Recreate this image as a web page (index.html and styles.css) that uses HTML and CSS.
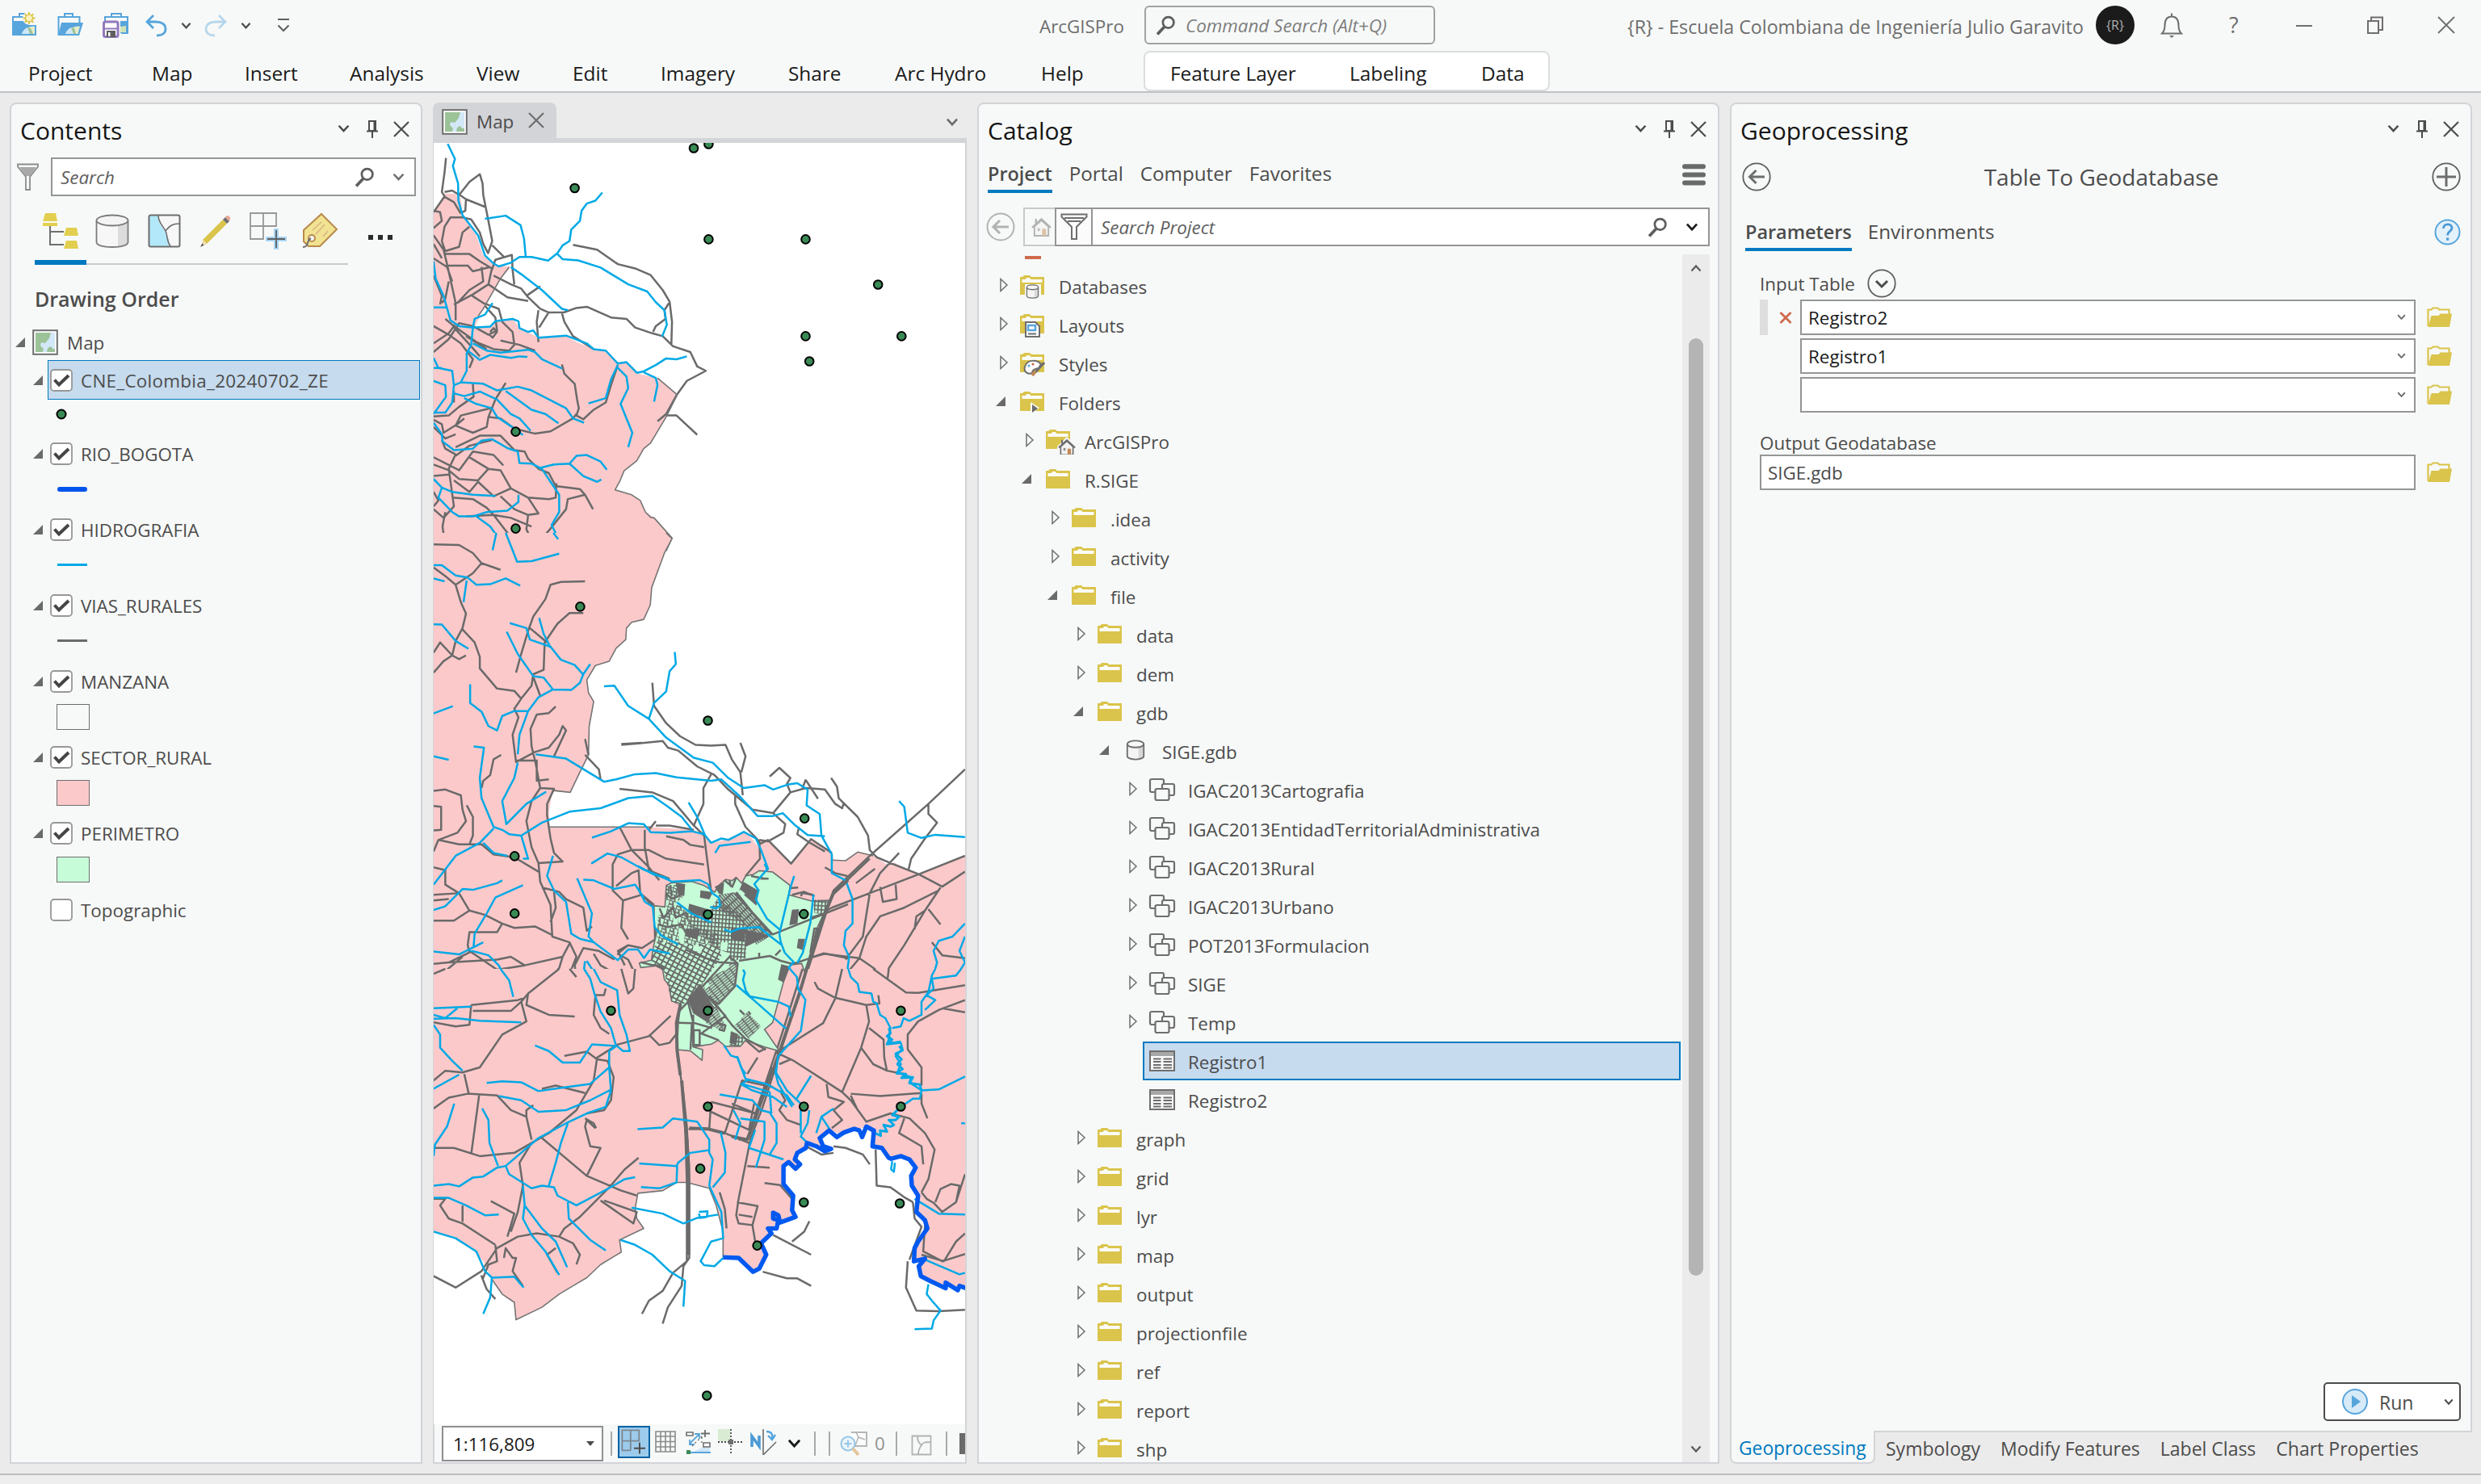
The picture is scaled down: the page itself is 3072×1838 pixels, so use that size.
FILE: index.html
```html
<!DOCTYPE html>
<html lang="en">
<head>
<meta charset="utf-8">
<title>ArcGISPro</title>
<link rel="stylesheet" href="styles.css">
</head>
<body>
<svg class="defs" width="0" height="0" aria-hidden="true">
  <defs>
    <symbol id="chev" viewBox="0 0 14 10"><path d="M1.500 1.500 7 7.500 12.500 1.500" fill="none" stroke="currentColor" stroke-width="2.400"/></symbol>
    <symbol id="pin" viewBox="0 0 16 22"><path d="M4 1h8v12H4zM1 13.500h14M8 14v8M10.500 1v12" fill="none" stroke="currentColor" stroke-width="2"/></symbol>
    <symbol id="close" viewBox="0 0 22 22"><path d="M2 2 20 20M20 2 2 20" fill="none" stroke="currentColor" stroke-width="2.200"/></symbol>
    <symbol id="mag" viewBox="0 0 24 24"><circle cx="15" cy="8.500" r="6.500" fill="none" stroke="currentColor" stroke-width="2.600"/><path d="M10.500 13.500 2 22.500" stroke="currentColor" stroke-width="3.600"/></symbol>
    <symbol id="open" viewBox="0 0 14 14"><path d="M13 1v12H1z" fill="#6a6a6a"/></symbol>
    <symbol id="shut" viewBox="0 0 12 18"><path d="M2 1.500 10 9 2 16.500z" fill="none" stroke="#6e6e6e" stroke-width="1.500"/></symbol>
    <symbol id="folder" viewBox="0 0 32 26"><path d="M1 3h3l2-2h7l2 2h16v22H1z" fill="#dac44b"/><path d="M3.500 6h4l2-2h3l2 2h14v4H3.500z" fill="#fbfbf7"/></symbol>
    <symbol id="folderopen" viewBox="0 0 32 26"><path d="M2 24V3.500h4l2-2h6l2 2h12V10" fill="none" stroke="#dac44b" stroke-width="2.200"/><path d="M6 11h9l2-2.500h14.500L28.500 25H2z" fill="#dac44b"/></symbol>
    <symbol id="cyl" viewBox="0 0 42 42"><path d="M1.500 8v27c0 3.500 8 6 19.500 6s19.500-2.500 19.500-6V8" fill="#f7f7f7"/><path d="M28 14v26.500c7-.5 12-3 12-5.500V9c-1 3-5 4.500-12 5z" fill="#dcdcdc"/><path d="M1.500 8v27c0 3.500 8 6 19.500 6s19.500-2.500 19.500-6V8" fill="none" stroke="#7b7b7b" stroke-width="1.800"/><ellipse cx="21" cy="8" rx="19.500" ry="6.500" fill="#f4f4f4" stroke="#7b7b7b" stroke-width="1.800"/></symbol>
    <symbol id="cyls" viewBox="0 0 26 28"><path d="M2 6v16c0 2.500 5 4.500 11 4.500s11-2 11-4.500V6" fill="#f4f4f4"/><path d="M17 10v16c4-1 7-2 7-4V6z" fill="#d8d8d8"/><path d="M2 6v16c0 2.500 5 4.500 11 4.500s11-2 11-4.500V6" fill="none" stroke="#6e6e6e" stroke-width="2"/><ellipse cx="13" cy="6" rx="11" ry="4.500" fill="#f7f7f7" stroke="#6e6e6e" stroke-width="2"/></symbol>
    <symbol id="dataset" viewBox="0 0 34 30"><g fill="#f7f9f8" stroke="#6e6e6e" stroke-width="2.200"><rect x="2" y="2" width="17" height="16" rx="2"/><rect x="17" y="8" width="15" height="14" rx="2"/><rect x="8.500" y="14" width="17" height="14" rx="2"/></g></symbol>
    <symbol id="table" viewBox="0 0 34 28"><rect x="2" y="2" width="30" height="24" fill="#f9f9f9" stroke="#6e6e6e" stroke-width="2"/><path d="M3 5.500h28" stroke="#a8a8a8" stroke-width="5"/><path d="M6 11.500h9.500M18.500 11.500H29M6 15h9.500M18.500 15H29M6 19h9.500M18.500 19H29M6 22.500h9.500M18.500 22.500H29" stroke="#6e6e6e" stroke-width="1.800"/></symbol>
    <symbol id="mapicon" viewBox="0 0 32 32"><rect x="1.200" y="1.200" width="29.600" height="29.600" fill="#fff" stroke="#6e6e6e" stroke-width="2"/><rect x="4" y="4" width="24" height="24" fill="#9cc298"/><path d="M23 4h5v20h-3l-2-3-4 2-1 5h-5l1-4-4-4 1-4 5 1 5-6z" fill="#d3e8f7"/></symbol>
    <symbol id="house" viewBox="0 0 26 26"><path d="M4 12v12h18V12L13 4z" fill="#f4f4f4" stroke="currentColor" stroke-width="2"/><path d="M1 13.500 13 2.500 25 13.500M6 8V2" fill="none" stroke="currentColor" stroke-width="2.400"/><path d="M14 24v-9h5v9z" fill="#c08a55"/><path d="M8 14h3v4H8z" fill="#8b8b8b"/></symbol>
    <symbol id="sel" viewBox="0 0 46 46"><path d="M1 1h32v16H1zM17 1v32H1V17" fill="none" stroke="#979797" stroke-width="1.800"/><path d="M33 20v26M20 33h26" stroke="#a9d6f5" stroke-width="6"/><path d="M33 22v22M22 33h22" stroke="#5e5e5e" stroke-width="1.800"/></symbol>
    <symbol id="check" viewBox="0 0 28 28"><rect x="1" y="1" width="26" height="26" rx="4" fill="#fff" stroke="#979797" stroke-width="1.800"/><path d="M5.500 13.500 11 19.500 23 8" fill="none" stroke="#454545" stroke-width="4"/></symbol>
    <symbol id="uncheck" viewBox="0 0 28 28"><rect x="1" y="1" width="26" height="26" rx="4" fill="#fff" stroke="#979797" stroke-width="1.800"/></symbol>
  </defs>
</svg>

<header class="titlebar">
  <div class="qat">
    <svg width="32" height="32" viewBox="0 0 32 32"><path d="M1 11h15l6 5h9v13H1z" fill="#57a5dc"/><path d="M2 11V6h14M10 6V2h7" fill="none" stroke="#57a5dc" stroke-width="2"/><path d="M13 27c2-6 7-9 16-9.500V27z" fill="#e4eccb"/><path d="M13 27c1.500-4 4-6.500 7-8l6 8z" fill="#cfe6f7"/><path d="M20 19l4 1 3 7h-4z" fill="#9cc298"/><circle cx="22" cy="7.500" r="8" fill="#f7f9f8"/><path d="M22 0v15M14.500 7.500h15M16.700 2.200l10.600 10.600M27.300 2.200 16.700 12.800" stroke="#dac44b" stroke-width="2"/><circle cx="22" cy="7.500" r="4.500" fill="#fbf0c0" stroke="#dac44b" stroke-width="1.600"/></svg>
    <svg width="34" height="32" viewBox="0 0 34 32"><path d="M1.500 29V6h26v7M9 6V2h10v4" fill="none" stroke="#57a5dc" stroke-width="2"/><path d="M5 13h27l-5 16H1z" fill="#57a5dc"/><path d="M10 27c2-6 8-9 18-9.500L25.500 27z" fill="#e4eccb"/><path d="M10 27c1.500-4 4-6.500 7-8l4 8z" fill="#cfe6f7"/><path d="M17 19l4 1 2 7h-3z" fill="#9cc298"/></svg>
    <svg width="34" height="36" viewBox="0 0 34 36"><path d="M3 13V8h28v20h-8M11 8V4h12v4" fill="none" stroke="#57a5dc" stroke-width="2"/><path d="M22 13h9v15h-9z" fill="#57a5dc"/><path d="M22 20l7-1v8h-7z" fill="#cfe3b8"/><rect x="1.500" y="14" width="17.500" height="18.500" rx="2" fill="#fff" stroke="#9279bd" stroke-width="3"/><path d="M3 22.500h15" stroke="#9279bd" stroke-width="2"/><path d="M5 33v-8h11v8z" fill="#5e5e5e"/><path d="M7 32v-5h2.500v5z" fill="#fff"/></svg>
    <svg width="30" height="32" viewBox="0 0 30 32"><path d="M11 4 3 12l8 8M4 12h10c7 0 12 3 12 9 0 5-4 8-11 8" fill="none" stroke="#57a5dc" stroke-width="2.800"/></svg>
    <svg class="mini g1" width="13" height="10"><use href="#chev"/></svg>
    <svg class="faded g2" width="30" height="32" viewBox="0 0 30 32"><path d="M19 4l8 8-8 8M26 12H15C8 12 3 15 3 21c0 5 4 8 11 8" fill="none" stroke="#57a5dc" stroke-width="2.800"/></svg>
    <svg class="mini g3" width="13" height="10"><use href="#chev"/></svg>
    <svg class="g4" width="16" height="20" viewBox="0 0 16 20"><path d="M1 3h14M1.500 10.500 8 17l6.500-6.500" fill="none" stroke="#5e5e5e" stroke-width="2"/></svg>
  </div>
  <span class="appname">ArcGISPro</span>
  <div class="cmdsearch"><svg width="25" height="25"><use href="#mag"/></svg><i>Command Search (Alt+Q)</i></div>
  <span class="org">{R} - Escuela Colombiana de Ingeniería Julio Garavito</span>
  <span class="avatar">{R}</span>
  <div class="winbtns">
    <svg width="28" height="32" viewBox="0 0 28 32"><path d="M2 26.500h24c-3-3-3.500-5-3.500-10C22.500 9 19 5.500 14 5.500S5.500 9 5.500 16.500c0 5-.5 7-3.500 10zM14 5V1.500" fill="none" stroke="#6e6e6e" stroke-width="2"/><path d="M11 29h6l-3 3z" fill="#6e6e6e"/></svg>
    <span class="qm">?</span>
    <svg width="20" height="22" viewBox="0 0 20 22"><path d="M0 12h20" stroke="#6e6e6e" stroke-width="2"/></svg>
    <svg width="22" height="22" viewBox="0 0 22 22"><path d="M2 6h13v15H2zM6 6V1.500h14V17h-5" fill="none" stroke="#6e6e6e" stroke-width="2"/></svg>
    <svg width="24" height="24" viewBox="0 0 24 24"><path d="M2 2 22 22M22 2 2 22" stroke="#6e6e6e" stroke-width="1.800"/></svg>
  </div>
</header>
<nav class="ribbon">
  <div class="maintabs"><span>Project</span><span>Map</span><span>Insert</span><span>Analysis</span><span>View</span><span>Edit</span><span>Imagery</span><span>Share</span><span>Arc Hydro</span><span>Help</span></div>
  <div class="ctxtabs"><span>Feature Layer</span><span>Labeling</span><span>Data</span></div>
</nav>

<main class="work">
  <section class="panel contents">
    <div class="phead"><h2>Contents</h2><div class="pbtns"><svg width="15" height="11"><use href="#chev"/></svg><svg width="16" height="22"><use href="#pin"/></svg><svg width="22" height="22"><use href="#close"/></svg></div></div>
    <div class="csearch">
      <svg width="27" height="34" viewBox="0 0 27 34"><path d="M1 1.500h25v3L16 17v16h-5V17L1 4.500z" fill="#f7f9f8" stroke="#8b8b8b" stroke-width="1.800"/><path d="M3 5h21l-8 11h-5z" fill="#a8a8a8"/></svg>
      <div class="box"><i>Search</i><svg width="25" height="25"><use href="#mag"/></svg><svg class="c" width="15" height="11"><use href="#chev"/></svg></div>
    </div>
    <div class="ctools">
      <svg width="44" height="46" viewBox="0 0 44 46"><path d="M3 1h13l2 10H0zM0 13h18v4H0z" fill="#e3cf4f"/><path d="M29 19h13l2 10H26zM29 35h13l2 10H26z" fill="#e3cf4f"/><path d="M9 17v23h17M9 24h17" fill="none" stroke="#6e6e6e" stroke-width="2"/></svg>
      <svg width="42" height="42"><use href="#cyl"/></svg>
      <svg width="42" height="42" viewBox="0 0 42 42"><rect x="1.500" y="1.500" width="39" height="39" rx="2" fill="#f7f7f7"/><path d="M2 2h11c0 8 2 11 7 18 5 7 6 12 7 20H2z" fill="#b3e8fa"/><path d="M13 2c0 8 5 12 9 19 3 7 1 12 6 19M22 21c5-6 8-9 18-9" fill="none" stroke="#6e6e6e" stroke-width="1.600"/><rect x="1.500" y="1.500" width="38" height="39" rx="2" fill="none" stroke="#6e6e6e" stroke-width="2"/></svg>
      <svg width="40" height="42" viewBox="0 0 40 42"><path d="M4 32 29 7l5 5L9 37z" fill="#dac44b"/><path d="M29 7l3-3 5 5-3 3z" fill="#6e6e6e"/><path d="M32 4c1-2 3-3 5-1s1 4 0 6z" fill="#e9a795"/><path d="M4 32l5 5-7 4z" fill="#f0dcb0"/><path d="M1 41l2.500-4.500 2 2z" fill="#4c4c4c"/></svg>
      <svg width="46" height="46"><use href="#sel"/></svg>
      <svg width="46" height="46" viewBox="0 0 46 46"><path d="M24 2 43 21 22 42H8l-6-6V22z" fill="#f1e392" stroke="#b98b4c" stroke-width="2"/><circle cx="12" cy="32" r="4" fill="#f7f9f8" stroke="#b98b4c" stroke-width="2"/><path d="M13 22l11-10M17 27l11-12M26 30l6-7" stroke="#dbb389" stroke-width="1.500"/><path d="M11 32c-6 3-2 11-10 11" fill="none" stroke="#6e6e6e" stroke-width="2"/></svg>
      <svg class="dots" width="31" height="6" viewBox="0 0 31 6"><path d="M0 0h6v6H0zM12 0h6v6h-6zM24 0h6v6h-6z" fill="#2b2b2b"/></svg>
    </div>
    <div class="cline"></div>
    <h3>Drawing Order</h3>
    <ul class="toc">
      <li class="row root"><svg class="tri" width="14" height="14"><use href="#open"/></svg><svg class="mi" width="32" height="32"><use href="#mapicon"/></svg><span class="tx">Map</span></li>
      <li class="row"><svg class="tri" width="14" height="14"><use href="#open"/></svg><div class="lab selected"><svg width="28" height="28"><use href="#check"/></svg><span class="tx">CNE_Colombia_20240702_ZE</span></div></li>
      <li class="sym first"><svg width="14" height="14"><circle cx="7" cy="7" r="5.500" fill="#3a8a56" stroke="#000" stroke-width="2"/></svg></li>
      <li class="row"><svg class="tri" width="14" height="14"><use href="#open"/></svg><div class="lab"><svg width="28" height="28"><use href="#check"/></svg><span class="tx">RIO_BOGOTA</span></div></li>
      <li class="sym"><b class="ln river"></b></li>
      <li class="row"><svg class="tri" width="14" height="14"><use href="#open"/></svg><div class="lab"><svg width="28" height="28"><use href="#check"/></svg><span class="tx">HIDROGRAFIA</span></div></li>
      <li class="sym"><b class="ln hydro"></b></li>
      <li class="row"><svg class="tri" width="14" height="14"><use href="#open"/></svg><div class="lab"><svg width="28" height="28"><use href="#check"/></svg><span class="tx">VIAS_RURALES</span></div></li>
      <li class="sym"><b class="ln road"></b></li>
      <li class="row"><svg class="tri" width="14" height="14"><use href="#open"/></svg><div class="lab"><svg width="28" height="28"><use href="#check"/></svg><span class="tx">MANZANA</span></div></li>
      <li class="sym"><b class="sw"></b></li>
      <li class="row"><svg class="tri" width="14" height="14"><use href="#open"/></svg><div class="lab"><svg width="28" height="28"><use href="#check"/></svg><span class="tx">SECTOR_RURAL</span></div></li>
      <li class="sym"><b class="sw pink"></b></li>
      <li class="row"><svg class="tri" width="14" height="14"><use href="#open"/></svg><div class="lab"><svg width="28" height="28"><use href="#check"/></svg><span class="tx">PERIMETRO</span></div></li>
      <li class="sym"><b class="sw green"></b></li>
      <li class="row"><span class="tri"></span><div class="lab"><svg width="28" height="28"><use href="#uncheck"/></svg><span class="tx">Topographic</span></div></li>
    </ul>
  </section>

  <section class="mapview">
    <div class="mtabs"><div class="mtab"><svg width="32" height="32"><use href="#mapicon"/></svg><span>Map</span><svg class="x" width="22" height="22"><use href="#close"/></svg></div><svg class="more" width="16" height="11"><use href="#chev"/></svg></div>
    <svg class="map" width="658" height="1587" viewBox="537 177 658 1587" preserveAspectRatio="none">
      <defs>
        <pattern id="gridA" width="13" height="15" patternUnits="userSpaceOnUse" patternTransform="rotate(4)"><path d="M0 0H13M0 0V15" fill="none" stroke="#6a6a6a" stroke-width="10"/></pattern>
        <pattern id="gridB" width="19" height="17" patternUnits="userSpaceOnUse" patternTransform="rotate(28)"><path d="M0 0H19M0 0V17" fill="none" stroke="#6a6a6a" stroke-width="12"/></pattern>
        <pattern id="gridC" width="9" height="26" patternUnits="userSpaceOnUse" patternTransform="rotate(-42)"><path d="M0 0H9M0 0V26" fill="none" stroke="#6a6a6a" stroke-width="11"/></pattern>
        <pattern id="gridD" width="30" height="24" patternUnits="userSpaceOnUse" patternTransform="rotate(16)"><path d="M0 0H30M0 0V24M12 0l8 24M0 14h14" fill="none" stroke="#6a6a6a" stroke-width="6"/></pattern>
        <pattern id="gridE" width="26" height="9" patternUnits="userSpaceOnUse" patternTransform="rotate(-38)"><path d="M0 0H26M0 0V9" fill="none" stroke="#6a6a6a" stroke-width="9"/></pattern>
      </defs>
      <rect x="537" y="177" width="658" height="1587" fill="#fff"/>
      <!-- northern sheet -->
      <g class="sheet" transform="translate(530 120) scale(.4273 .3571)">
        <path class="rural" d="M0 420 16 400 48 335 75 335 95 350 100 410 140 480 160 550 190 580 240 590 210 630 160 735 135 800 185 795 195 775 245 770 265 800 320 835 400 830 430 850 480 875 510 880 550 920 575 920 610 960 665 975 722 1033 690 1110 660 1170 645 1200 625 1220 605 1262 568 1297 555 1335 542 1363 590 1380 615 1400 630 1440 655 1460 707 1530 690 1575 0 1575z"/>
        <path class="via" d="M52 212 48 260 40 330 48 345 16 400M48 330 70 325 90 340 120 295 150 268 158 300 160 340 170 400 186 500 174 542 160 510 150 470 125 425 100 418 65 418 48 450 40 500 50 535 90 520 100 470 120 450M92 340 110 355 168 383M110 355 108 395 98 400M45 345 75 365 95 405M16 395 35 400 40 430 16 455M16 480 45 530 55 580 70 660 80 715 80 775M50 545 120 545 150 570 185 595 175 650 130 685 75 720M16 510 40 560M55 585 115 585 130 605 180 590M186 515 220 555M185 600 195 565 243 548 245 600 250 650M190 620 240 650 270 665 290 695 325 735 350 748 395 747 430 732 460 728 530 765 575 770 600 800 650 820 680 830 710 865 760 885 780 935 805 950 750 985 720 1035 690 1100 665 1125M285 690 325 657M175 650 230 695 290 708M320 740 315 780 320 850M348 750 322 800M388 750 395 780 420 830 480 875M420 513 490 530 550 580 600 595 645 618 680 670 700 710 707 780 705 862M698 715 685 740 688 770 660 795 652 815M128 690 160 715 205 735 215 780 245 815 250 860 235 880 190 875 140 850 75 795 50 770M165 725 195 765 200 810 175 825 130 795 90 785 60 840 16 885M16 795 60 825 95 855 130 910 120 940M16 855 60 820 78 790M180 815 190 802 200 815 187 835 178 825M75 800 125 865 150 900M110 830 170 875M210 845 265 860 310 880M388 928 395 960 425 995 432 1050 437 1080 430 1105 450 1118 480 1085 515 1060 530 1000 550 930M75 1020 75 1060M130 995 132 1040 90 1075 60 1105 16 1108M225 992 195 1050 175 1110 170 1145 130 1165 80 1140 95 1105 180 1080M16 1120 40 1135 45 1165 85 1135 105 1115M175 1110 210 1115 250 1150 310 1168 355 1160 420 1115 430 1100M16 1145 50 1185 80 1170M80 1215 150 1175 210 1175 250 1225 280 1230 290 1255 320 1290 350 1305 370 1350 440 1360 455 1380 478 1430M80 1245 120 1210 185 1190M40 1190 50 1220 80 1240 60 1290 75 1420 45 1460 16 1430M16 1250 90 1295 130 1230 190 1242 218 1278M16 1275 60 1295 90 1325 145 1330 175 1290 120 1250M16 1315 60 1310M75 1330 120 1370 145 1335 190 1385 240 1358 210 1295 175 1290M240 1358 290 1390 350 1395 370 1390 372 1340M16 1370 30 1400 16 1420M70 1390 130 1395 170 1425 190 1450 240 1460 300 1490M210 1385 250 1430 290 1450 320 1445 290 1390M290 1450 285 1500 310 1560 360 1490 400 1430 405 1395 455 1380M110 1455 190 1450 235 1520 262 1575M50 1440 42 1490 50 1560M16 1550 60 1565 105 1575M690 1105 720 1105 780 1172M16 620 40 690 35 720M60 640 50 700 40 715M16 560 55 590 70 640M155 590 160 640 120 670 85 715"/>
        <path class="edge" d="M722 1033 690 1110 660 1170 645 1200 625 1220 605 1262 568 1297 555 1335 542 1363 590 1380 615 1400 630 1440 645 1458 655 1460 707 1530 690 1575M235 590 210 630 160 735 145 760M665 975 722 1033"/>
        <path class="hid" d="M57 163 78 215 72 240 87 300 88 360 100 410 145 480 165 550 190 578 205 588 240 575 265 555 300 555 348 568 375 542 390 515 410 500 415 460 440 430 445 395 460 370 485 360 505 332M165 423 225 412 268 445 278 490 283 553M375 545 390 563 435 567 500 592 580 650 635 675 660 712 685 740 692 790 678 832M240 590 270 615 330 670 388 735 405 740M16 570 22 630 45 690 65 775 90 795 130 800 135 770 165 755 187 715M130 800 180 797 195 778 245 770 262 778 265 802 290 815 305 810 320 835 400 828 460 855 480 875 515 880 550 925 575 920 605 957 625 952 660 930 690 907 720 910 750 900M625 955 660 975 665 1000 655 1057M130 800 125 860 112 890 112 950 95 990 75 1000 70 1060 50 1095 16 1095M16 730 55 730M130 855 170 880 210 887 290 877 310 885 330 910 388 942M115 880 150 912 180 895 240 905 265 900 288 902M550 930 530 980 515 1045 465 1063M550 940 575 970 580 1010 558 1065 575 1115 592 1165 580 1215M95 990 160 995 200 1018 260 1005 300 1018 400 1080 420 1115 452 1130M225 1020 300 1085 340 1100 378 1132M75 1028 105 1038 150 1022 200 1050 240 1100 265 1115 297 1158M105 1045 140 1065 185 1080 200 1110 250 1150 275 1173M16 985 50 1000 52 1040 16 1100M16 905 30 940 70 950 75 1000M16 940 40 940M16 1130 40 1170 42 1195 75 1225 130 1220 155 1192 185 1187 230 1218 260 1230 265 1270 300 1272 330 1290 355 1335 380 1380 380 1440 358 1485 378 1532M320 1288 365 1275 410 1272 430 1245 460 1242 500 1265 518 1293M410 1272 450 1315 490 1335 502 1327M16 1325 40 1355 70 1370 130 1380 195 1384M40 1355 30 1390 70 1440 90 1455 130 1455 170 1440 230 1435 262 1405 262 1380M140 1455 180 1490 198 1520 190 1575M200 1525 225 1522 245 1575"/>
      </g>
      <!-- central sheet -->
      <g class="sheet" transform="translate(530 660) scale(.4273 .3571)">
        <path class="rural" d="M0 0H690L707 20 685 70 672 112 648 190 644 250 625 300 590 310 575 330 573 370 545 400 525 445 485 460 460 510 465 555 480 585 467 670 465 770 440 830 412 900 360 897 350 970 352 1020 645 1020 770 1030 805 1050 825 1075 860 1065 920 1035 955 1085 965 1065 985 1065 1052 1147 1070 1115 1110 1062 1172 1110 1175 1135 1210 1137 1245 1107 1290 1120 1330 1150 1350 1143 1420 1183 1560 1120 1560 1575 0 1575z"/>
        <path class="edge" d="M690 0 707 20 685 70 672 112 648 190 644 250 625 300 590 310 575 330 573 370 545 400 525 445 485 460 460 510 465 555 480 585 467 670 465 770 440 830 412 900 360 893M352 1020H645M1172 1135 1210 1137 1245 1107 1290 1120"/>
        <path class="via" d="M16 40 90 42 130 70 155 105 130 140 80 180 50 150 16 120M155 105 210 128M80 180 95 240 110 280 100 330 80 375 70 425 35 380 16 415M70 425 90 438 110 425M16 485 45 445 70 425M100 335 135 380 150 430 150 470 200 540 250 548 270 575 300 530 305 490 335 475 338 380 375 315 410 278 450 278M455 168 385 170 355 180 340 230 305 290 290 340 270 420 255 485M295 330 345 380M305 500 325 565M270 575 250 610 262 640 245 700 255 795 310 760 350 745 380 700 390 670 400 685 365 775M370 602 350 625 315 630 297 680 300 740 312 800 325 885 365 888 345 940 345 980 355 1060 365 1110 390 1140 320 1145 325 1210 355 1290 360 1400 410 1420 430 1470 410 1530 430 1540 425 1500 450 1440 495 1450 540 1480M255 790 315 790 315 860 350 855M325 885 300 930 285 1000 300 1090 320 1145M212 770 190 785 180 840 160 860 155 885M16 895 50 890 95 910 100 960 110 1000 85 1040 30 1065 16 1105M16 947 38 950 38 1030 16 1032M112 945 130 985 130 1050 120 1080M30 1065 90 1080 155 1080 190 1115 250 1125 320 1175M16 1160 50 1170 50 1220 90 1250 120 1310 165 1325 215 1355 250 1370 310 1365 360 1395M16 1255 85 1250M16 1275 60 1270M16 1345 75 1345 120 1310M215 1355 200 1385 120 1385 115 1430 120 1455 60 1490 16 1495M120 1450 200 1515 280 1500 390 1470 410 1425M60 1490 200 1480 240 1470 280 1500M330 1230 380 1245 400 1270 450 1300 460 1380 475 1365M365 1245 370 1300 355 1350M16 1540 50 1520 100 1470M310 1575 380 1510 390 1470M555 1020 590 1100 640 1100 690 1130 800 1150M590 1100 640 1160 670 1205M590 1100 550 1115 535 1150 535 1240 565 1275 560 1370 580 1410M628 1030 628 1090 640 1170 700 1200M545 1225 590 1180 610 1170 615 1250 655 1290M565 1275 620 1255 655 1300 658 1410 620 1440 580 1430 550 1450 570 1500M580 1430 550 1460 580 1480 600 1530 600 1575M480 1460 500 1500 530 1520M455 770 495 820 500 855M455 715 465 770M560 735 610 730 680 722 695 745 725 755 780 810 830 840 870 890 940 960 1000 972 1035 1010 1030 1040 985 1070 960 1065M560 732 620 728M650 520 655 600 690 660 730 705 775 735 820 738 862 735 880 785 905 830 912 910M905 728 920 775 908 830M820 838 798 885 798 940 770 1015 710 930 650 900 555 888M890 910 890 940 920 1020 960 1070 962 1130 920 1190M1000 972 1050 900 1095 885 1150 890 1180 940 1200 955 1205 935M990 845 1018 815 1050 850 1040 870 1050 900M1095 858 1130 922M1085 885 1095 855M1168 850 1185 880 1190 920 1245 985 1275 1050 1280 1100 1300 1125 1350 1150 1420 1183 1490 1227 1556 1175M1170 1110 1110 1062 1052 1147 985 1065 960 1080M1075 1020 1070 1045 1100 1070 1150 1105M1556 820 1450 940 1280 1120 1175 1240 1145 1350 1085 1575M1450 940 1450 975 1475 1005 1440 1060 1400 1130 1392 1170M1556 1120 1420 1185 1300 1240 1170 1300 1110 1340 1000 1390M1365 1110 1310 1180 1280 1250 1260 1400 1210 1480M1485 1230 1440 1310 1380 1430 1335 1510 1332 1575M1480 1240 1380 1300 1310 1330 1270 1400 1250 1475 1180 1575M1310 1228 1318 1280 1358 1270 1355 1220M1085 1480 1150 1460 1250 1475 1370 1575M1450 1305 1485 1358M1410 1375 1415 1330 1440 1310M1460 1420 1490 1465 1556 1475M1280 1130 1210 1210 1180 1240M640 1030 660 1000M660 1015 700 1015 770 1030M690 1052 740 1065 760 1082 800 1090M770 1015 800 1050 820 1240M1150 1160 1180 1180 1215 1190M1295 1165 1240 1215M1055 1255 1090 1245 1120 1260"/>
        <path class="hid" d="M16 112 40 112 80 148 115 155 140 180 180 178 225 158 267 183M112 165 103 240M198 0 187 60M225 0 245 60 258 100 300 98 380 72M363 0 377 22M16 158 48 168M16 317 40 318 80 375 117 402M228 343 260 420 305 497 335 502 362 543 415 545 440 520 450 490 470 455M237 313 285 330 295 370 355 395 385 440 425 458 450 492M322 295 335 350 355 398M362 543 320 570 290 618 265 700 260 768M290 618 250 618 215 635 200 685 175 670 155 620 122 590 122 525M16 626 72 601M132 741 162 745 150 850 155 920 190 1020 215 1030 235 1045 270 1050 290 1130 275 1130M260 797 250 850 215 930 227 1010 285 940 342 898M16 775 60 787M312 768 400 783 510 863 545 855 600 837 660 833 720 848 820 860 850 855 900 910 955 982 1000 982 1028 972 1060 1010 1100 1048 1150 1052M270 1050 330 1005 410 967 500 955 580 920 650 912 690 945 735 985 765 1030M475 1057 530 1035 580 1007 625 1010 645 1038 700 1040 765 1035 800 1045 820 1075 850 1060 870 1065 915 1037 950 1060 965 1100 985 1165 945 1215M755 935 780 985 803 1050M832 1110 845 1085 935 1072M510 532 540 530 580 600 640 645 690 710 770 780 825 797 870 850 915 885 975 875 1000 890 1045 872 1070 868 1100 890 1097 945 1135 975 1140 1050 1170 1115 1170 1180 1210 1205 1230 1270 1230 1355 1210 1380 1205 1430 1220 1470 1215 1520 1250 1568M640 645 655 590 690 550 700 480 718 455 715 413M1365 930 1380 950 1390 1040 1430 1058 1470 1047 1556 1055M16 1220 80 1120 150 1075 190 1025M160 1075 190 1110 230 1120M16 1308 50 1295 100 1235 130 1238 200 1215 215 1205M275 1222 195 1265 170 1320 135 1390 132 1435M16 1452 90 1462 160 1420M120 1448 175 1465 205 1500 235 1575M362 1120 345 1190 365 1240 400 1280 415 1390 440 1408 480 1420 550 1482 580 1445 610 1445M432 1198 475 1320 465 1400 480 1420M450 1203 480 1205 540 1235 600 1220 625 1265M473 1147 520 1112 560 1125 620 1165 700 1205M460 1485 490 1540 530 1575M455 1485 450 1530 465 1575M1556 1355 1520 1400 1480 1415 1465 1450 1475 1490 1455 1575M1556 1400 1540 1450 1556 1490 1530 1540 1470 1540"/>
      </g>
      <!-- southern sheet -->
      <g class="sheet" transform="translate(530 1200) scale(.4273 .4069)">
        <path class="rural" d="M0 0H1560V970L1500 965 1430 940 1425 890 1410 885 1410 850 1447 790 1415 740 1420 690 1400 640 1412 600 1375 570 1340 580 1320 550 1290 540 1290 505 1270 482 1230 490 1200 505 1160 490 1135 515 1160 550 1100 530 1065 565 1080 605 1035 595 1030 650 1055 690 1062 755 1010 770 985 810 960 835 983 870 945 922 905 885 855 878 855 800 835 720 815 668 750 650 720 650 680 675 608 683 600 730 605 760 625 790 555 825 560 862 500 900 460 940 420 965 380 990 330 1030 255 1068 250 1015 215 990 185 945 160 890 130 855 75 815 0 800z"/>
        <path class="edge" d="M855 878 855 800 835 720 815 668 750 650 720 650 680 675 608 683 600 730 605 760 625 790 555 825 560 862 500 900 460 940 420 965 380 990 330 1030 255 1068 250 1015 215 990 185 945"/>
        <path class="via" d="M735 100 720 170 722 260 740 380 750 480 757 640 757 880 740 905 735 965 695 1030 680 1080M745 480 750 650 750 890 710 925 680 980 640 1010 620 1050M1098 0 1040 190 970 420 935 515 900 700 893 750 900 775 940 780 948 830 955 842M1085 0 1025 200 955 420 925 518 900 520M755 488 800 485 860 500 930 530M1052 275 1018 290M1010 255 1060 280 1200 375 1225 400 1270 465 1340 440 1395 455 1440 500 1468 550 1450 640 1430 680M1120 40 1130 60 1180 88 1270 110 1308 105 1305 80M1200 0 1180 90 1145 165 1010 255M1270 110 1278 160 1255 240 1200 375M1255 240 1290 290 1330 310 1380 320M1278 180 1320 215 1322 270 1330 312M1225 380 1310 387 1430 378M1225 385 1245 430M1430 355 1430 300 1390 245 1390 200 1420 160 1480 125 1556 95M1290 0 1385 72 1420 73 1556 50M1490 120 1556 132M1430 380 1430 410 1447 455M1380 455 1365 500 1430 540 1435 595M1335 0 1332 28M1155 350 1160 390 1205 405 1175 430 1200 460 1170 485M820 405 950 440M815 485 820 405M860 500 910 340 1000 360M820 435 930 490M880 410 950 440M930 490 945 410M1020 370 1035 400 1018 430 1040 460 1080 475M925 600 990 605M955 270 925 320M975 652 1020 658 1055 700M895 710 955 722 940 780M900 748 940 755M845 680 860 730 865 790M1055 830 1090 800 1105 768M1000 810 1110 870M970 922 1040 942 1070 942 1110 965M1175 540 1210 545 1260 565 1280 595M1095 540 1140 565 1175 560M1297 550 1300 660 1340 665 1380 695 1405 710M1405 710 1410 760 1430 785 1395 885M1390 890 1385 970 1415 1040 1480 1042 1556 1038M1430 680 1445 700 1465 712 1490 740 1530 710 1556 625M1470 710 1485 670 1515 655 1540 660 1530 710M1430 870 1495 890 1530 830 1556 805M1440 780 1435 860 1490 890 1556 868M16 15 50 0M380 0 290 75 270 100 285 160 215 200 150 300 100 315 50 310 16 340M290 75 285 110 350 140 425 145M125 110 260 95 275 90M130 128 240 128 270 100M125 110 120 170 80 175 16 163M410 0 430 25M560 0 580 75 595 60 600 0M515 60 510 80 485 80 480 140 500 180 525 198M703 143 640 205 550 230 490 270 480 340 430 430 350 500 250 560 150 570 75 545 20 545M640 200 670 232 700 225 718 200M395 265 460 252 490 275 520 280 538 330 530 400 510 430 460 440M330 365 370 355 455 378M16 425 60 392 115 380 200 385 240 430 285 450 300 520M148 385 125 565M305 415 285 430 285 450M105 320 118 380M330 515 460 630 560 675 605 690M460 630 500 545 470 540 455 480 460 460 485 485M610 575 570 610 525 665 440 755 395 790 380 815 315 805 260 815 200 850 155 920 80 970 16 935M455 455 480 470 487 485M300 530 265 590 275 660 260 740 240 800M500 705 595 775 605 740 510 705M182 707 250 745 230 815M16 700 50 700 35 720 60 760 100 775 195 840M100 720 100 770M380 815 420 835 440 870 430 900M370 850 345 870 375 925M195 840 200 890 175 900 160 940 155 935 170 975 195 1005M220 880 225 850 245 880 255 880 245 920 275 965"/>
        <path class="via thick" d="M735 340 745 470 750 520 755 600V870M757 485 810 487 860 500M880 510 925 520 940 480 1000 300"/>
        <path class="hid" d="M16 120 125 115M16 140 50 150 85 120M16 152 80 150 150 158 270 163M210 0 235 35 247 85M16 170 35 200 35 240 70 280 100 310M16 365 90 322M310 233 350 250 390 285 440 285 475 230 545 235 530 180 500 130 482 75 470 30 452 0M480 0 500 40 548 65 555 140 575 200 585 250 565 250 548 235M545 235 525 250 525 300 470 350 400 360 320 372 270 345 215 342 170 347M525 300 530 370 515 420 460 440 400 470 320 515 225 600 200 605 160 632 130 635 90 662 60 655 16 660M530 368 470 400 400 430 320 435 270 400 205 387M157 425 175 460 178 530 203 600M76 410 55 480 20 535 16 570M405 470 385 530 370 590 350 660M225 600 235 625 300 668 330 660 365 665 375 690 430 720 520 670 570 640 600 634M405 710 408 760 470 825 515 857M275 660 280 720 330 790 370 830 403 908M280 720 275 760 300 810 340 860 380 932M16 697 60 697 110 720 165 750 205 748M16 800 80 820 140 860 165 920 185 940 180 1000 160 1050M185 940 250 937 277 970M607 488 680 483 710 455 780 465 815 520 815 560 825 580 815 660 850 740 855 820 820 830 790 890 800 902 830 905 855 880M612 592 720 600 725 590 760 560 815 552M617 664 670 668 720 650 722 600M848 497 862 560 860 620 825 665M590 727 680 745 740 775 780 758 840 748M785 740 810 738 808 755 788 758 785 745M558 825 600 840 650 870 700 920 745 950 740 1028M895 265 920 335 980 350 1040 385 1060 415M905 350 940 370 1000 390 1040 420M845 382 940 400 965 430 990 437 1010 470 1010 530 990 565M905 455 975 465 975 520 950 605M885 430 905 470 890 520M930 545 1030 580M948 490 930 545M930 335 910 350 990 375 995 440M1015 265 1005 310 1040 370 1080 410M1005 310 1015 350 1055 420M1110 325 1065 400M1105 430 1100 470 1080 510 1095 525M1080 430 1080 500M1175 425 1140 450 1125 500M1140 450 1165 490M1218 0 1225 25 1245 45 1250 70 1285 75 1290 100 1300 105 1310 140 1325 150 1340 180 1335 215 1330 230 1370 225 1375 245 1355 265 1370 290 1360 315 1400 330 1395 345 1430 370 1480 367 1556 328M1430 370 1425 395 1405 395 1370 420M1345 180 1370 175 1378 150 1395 158 1430 140 1430 100 1450 70 1460 20 1470 0M1440 125 1470 95 1445 80 1465 60 1460 30 1530 20 1545 0M1545 470h11M1345 585 1342 610 1350 618 1353 590M1410 700 1480 745 1556 748M1440 885 1540 930 1556 925M1450 960 1445 990 1460 1010 1485 1040 1465 1070 1460 1095 1410 1097"/>
        <path class="hid wide" d="M1365 425 1345 445 1365 450 1355 460 1335 460 1350 475 1340 480 1320 475 1330 495 1310 492 1312 508 1295 500M1335 180 1340 195 1330 205 1345 215 1330 228 1370 222M1365 235 1375 248 1355 258 1372 275 1360 290 1375 305 1358 318 1385 320 1372 332 1405 330 1395 348 1425 352 1430 370"/>
        <path class="bog" d="M855 878 900 880 925 905 942 922 960 912 980 870 965 835 995 805 985 790 1010 790 1015 765 1000 760 1000 742 1015 750 1020 772 1065 755 1055 735 1058 690 1030 655 1030 600 1045 588 1065 608 1078 595 1063 580 1070 560 1095 545 1098 530 1125 540 1150 555 1168 548 1145 540 1135 515 1162 492 1185 512 1205 498 1235 487 1250 492 1258 512 1270 480 1292 492 1288 540 1315 545 1335 575 1342 578 1370 570 1395 580 1413 605 1400 630 1402 660 1420 690 1415 740 1440 765 1447 790 1420 830 1410 850 1408 890 1440 882 1422 905 1428 935 1455 950 1500 972 1500 955 1535 978 1540 965 1560 972"/>
      </g>
      <!-- town -->
      <g class="sheet" transform="translate(790 1070) scale(.33333)">
        <path class="town edge2" d="M60 155 100 160 105 80 125 70 200 65 245 80 285 105 300 80 325 58 350 62 365 50 385 72 400 45 430 38 450 25 500 30 565 80 560 115 645 138 710 135 685 195 660 250 645 330 618 400 608 370 565 375 540 440 500 590 470 615 525 695 470 680 400 655 380 678 325 678 298 655 272 670 205 680 240 690 238 730 220 715 195 695 145 690 150 590 158 518 125 510 115 450 98 430 92 395 75 378 10 385 5 368 50 358 55 320 70 250 60 230z"/>
        <path fill="url(#gridD)" d="M105 80 175 75 170 120 135 150 175 160 200 230 300 260 300 300 70 290 75 190 105 190z"/>
        <path fill="url(#gridA)" d="M165 180 255 190 295 130 385 190 405 245 400 350 345 362 335 330 305 320 200 240z"/>
        <path fill="url(#gridB)" d="M55 320 70 290 300 300 310 345 230 460 160 530 125 510 95 395 50 365z"/>
        <path fill="url(#gridC)" d="M300 115 360 105 500 262 440 300 385 215 300 170z"/>
        <path fill="url(#gridE)" d="M235 450 345 368 370 372 360 450 290 525z"/>
        <path fill="url(#gridE)" d="M360 600 405 552 457 602 412 650zM262 540 290 530 325 600 310 620 250 590z"/>
        <path fill="url(#gridA)" d="M650 133 710 135 692 188 655 182zM345 620 400 650 375 678 340 675z"/>
        <path fill="#6a6a6a" d="M390 65 448 100 440 155 375 100zM285 85 320 68 315 115 300 110zM232 98 278 105 265 132 230 125zM190 148 258 168 256 200 185 180zM398 245 490 265 400 308zM345 240 400 240 395 290 345 280zM572 170 598 168 592 222 562 228zM595 278 620 278 612 320 590 312zM532 373 562 380 540 440 520 430zM185 505 230 455 285 535 260 590 205 555zM345 622 372 632 365 672 340 665zM140 70 175 75 172 118 150 120zM175 240 230 245 220 280 180 270z"/>
        <path class="townfill" d="M308 290 335 292 330 325 305 318zM290 395 335 370 340 385 300 405zM240 440 255 435 268 452 250 465zM380 95 398 110 388 122 368 108zM130 195 150 200 145 235 132 225zM150 240 175 245 170 300 152 290zM205 300 240 310 235 330 205 322z"/>
        <path class="via" d="M780 150 500 262 360 110M365 105 480 250M240 455 340 345 370 370 300 365 250 350 180 320M375 360 490 342 530 360 575 372 640 350M530 320 510 340M300 655 235 630 325 565 265 500 230 450 185 510 205 590 275 610M205 560 205 680M207 618h22v55h-22zM150 590 200 592 195 690M265 490 350 600 400 650 475 690M378 543 395 560M410 548 418 560M400 655 450 698 475 685M240 455 155 545M640 350 690 332 780 350M640 330 655 240 668 240 655 290M470 55 420 45M485 55h-30M450 330v14M565 90 595 88M605 120 610 108 650 115M640 200 690 185M320 60 350 85 365 50M345 85 340 60M80 165 95 200 130 160 140 200 180 180M75 225 110 235 160 225 180 260M290 590 325 600 320 620 300 615M105 110 125 130 150 120M120 80 125 120M10 365 50 375 75 378M370 372 360 455 300 520 262 500"/>
        <path class="via thick" d="M780 60 725 110 690 195 640 345 600 480 525 700 490 800M158 520 143 590 145 690 157 785M70 378 100 390"/>
        <path class="hid" d="M0 8 60 40 100 50 125 66 230 60 260 75 275 108 300 125 305 155 290 165 268 160M0 90 25 140 55 160 62 235 85 265 150 300M0 318 22 350 45 318 118 333M145 143 200 185 245 205 272 217M470 0 480 20 432 75 448 98 438 133 480 205 528 245M580 45 567 85 525 260 530 290 545 330 578 365 560 385 590 420 595 465 622 505 605 620 560 670 520 715 512 780M652 113 640 220 612 330 592 368M320 243 345 253 375 240 450 235 490 268 532 300M390 393 397 405 390 430 400 470 415 492 520 512 560 530 567 568M365 450 440 515 550 612M320 675 345 712 370 720 385 760 400 780"/>
      </g>
      <g class="pts"><circle cx="859" cy="183.500" r="5.300"/><circle cx="877.400" cy="178.500" r="5.300"/><circle cx="711.600" cy="233" r="5.300"/><circle cx="877.400" cy="296.400" r="5.300"/><circle cx="997.500" cy="296.400" r="5.300"/><circle cx="1087.200" cy="352.500" r="5.300"/><circle cx="997.500" cy="416.400" r="5.300"/><circle cx="1116.300" cy="416.400" r="5.300"/><circle cx="1002.200" cy="447.500" r="5.300"/><circle cx="638.500" cy="534.600" r="5.300"/><circle cx="638.500" cy="654.600" r="5.300"/><circle cx="718.400" cy="751.400" r="5.300"/><circle cx="876.500" cy="892.500" r="5.300"/><circle cx="996.200" cy="1013.600" r="5.300"/><circle cx="637.200" cy="1060.400" r="5.300"/><circle cx="637.200" cy="1131.400" r="5.300"/><circle cx="876.500" cy="1132.500" r="5.300"/><circle cx="995.300" cy="1132.100" r="5.300"/><circle cx="756.500" cy="1251.700" r="5.300"/><circle cx="876.500" cy="1251.700" r="5.300"/><circle cx="1115.400" cy="1251.700" r="5.300"/><circle cx="876.500" cy="1370.500" r="5.300"/><circle cx="995.300" cy="1370.500" r="5.300"/><circle cx="1115.400" cy="1370.500" r="5.300"/><circle cx="867.100" cy="1447.400" r="5.300"/><circle cx="995.300" cy="1489.300" r="5.300"/><circle cx="1114.100" cy="1490.500" r="5.300"/><circle cx="937.600" cy="1542.600" r="5.300"/><circle cx="875.300" cy="1728.500" r="5.300"/></g>
    </svg>
    <div class="mbar">
      <div class="scale"><span>1:116,809</span><svg width="10" height="6" viewBox="0 0 10 6"><path d="M0 0h10L5 6z" fill="#4c4c4c"/></svg></div>
      <b class="sep s1"></b>
      <span class="snap"><svg width="32" height="32" viewBox="0 0 46 46"><path d="M2 2h30v19H2zM17 2v36M2 21v17h15" fill="none" stroke="#7d8790" stroke-width="2.600"/><path d="M33 24v20M23 34h20" stroke="#4c4c4c" stroke-width="2.800"/></svg></span>
      <svg class="t1" width="26" height="27" viewBox="0 0 26 27"><path d="M1 1h24v25H1zM7 1v25M13 1v25M19 1v25M1 7h24M1 13.500h24M1 20h24" fill="none" stroke="#8b8b8b" stroke-width="1.600"/></svg>
      <svg class="t2" width="32" height="30" viewBox="0 0 32 30"><path d="M30 17v11H8z" fill="#cfe6f7"/><path d="M4 28h27" stroke="#57a5dc" stroke-width="2"/><path d="M5 17 16 6M5 12v6h6M11 5h6v6" fill="none" stroke="#57a5dc" stroke-width="1.800"/><path d="M1 3h8v4H1zM22 16h8v5h-8z" fill="#fff" stroke="#6e6e6e" stroke-width="1.600"/><path d="M24 0v9M19 4.500h11" stroke="#6e6e6e" stroke-width="1.800"/><path d="M1 25h5v5H1z" fill="#3a8a56"/><path d="M8 20l12-12M20 9v8" stroke="#6e6e6e" stroke-width="1.400" stroke-dasharray="2 3"/></svg>
      <svg class="t3" width="32" height="32" viewBox="0 0 32 32"><path d="M0 0h15v15H0z" fill="#d9ecd3"/><path d="M0 16h32M16 0v32" stroke="#4c4c4c" stroke-width="1.800" stroke-dasharray="2 2"/><path d="M13 13h6v6h-6z" fill="#6e6e6e"/></svg>
      <svg class="t4" width="34" height="32" viewBox="0 0 34 32"><path d="M2 22V9l9 12V8" fill="none" stroke="#4a9ad6" stroke-width="3.600"/><path d="M16 0v32L32 16" fill="none" stroke="#6e6e6e" stroke-width="1.600"/><path d="M20 3c6 0 8 3 7 9M22 8l5 5 4-6" fill="none" stroke="#57a5dc" stroke-width="2.400"/></svg>
      <svg class="t5" width="17" height="12"><use href="#chev"/></svg>
      <b class="sep s2"></b><b class="sep s3"></b>
      <span class="zsel"><svg width="34" height="34" viewBox="0 0 34 34"><path d="M14 3h19v17H18" fill="#fff" stroke="#8b8b8b" stroke-width="2"/><path d="M20 3l3 6 8 3M23 9l-4 10" fill="none" stroke="#8b8b8b" stroke-width="1.600"/><circle cx="10" cy="17" r="8.500" fill="#e6f3fc" stroke="#57a5dc" stroke-width="2"/><path d="M5.500 17h9M10 12.500v9" stroke="#57a5dc" stroke-width="2"/><path d="M16 23l7 8" stroke="#dba35f" stroke-width="4"/></svg><span>0</span></span>
      <b class="sep s4"></b>
      <svg class="faded2 t6" width="26" height="26" viewBox="0 0 26 26"><path d="M1.500 1.500h23v23h-23zM8 2c0 5 1 8 5 11-3 4-4 7-4 11M13 13c2-4 5-4 11-4" fill="none" stroke="#6e6e6e" stroke-width="1.800"/></svg>
      <b class="sep s5"></b>
      <b class="pause"></b>
    </div>
  </section>

  <section class="panel catalog">
    <div class="phead"><h2>Catalog</h2><div class="pbtns"><svg width="15" height="11"><use href="#chev"/></svg><svg width="16" height="22"><use href="#pin"/></svg><svg width="22" height="22"><use href="#close"/></svg></div></div>
    <div class="tabs"><span class="on">Project</span><span>Portal</span><span>Computer</span><span>Favorites</span><svg class="burger" width="29" height="27" viewBox="0 0 29 27"><path d="M3 3.200h23M3 13.400h23M3 23.600h23" stroke="#6a6a6a" stroke-width="6" stroke-linecap="round"/></svg></div>
    <div class="psearch">
      <svg class="faded2" width="36" height="36" viewBox="0 0 36 36"><circle cx="18" cy="18" r="16.500" fill="none" stroke="#6e6e6e" stroke-width="2"/><path d="M28 18H10M17 10l-8 8 8 8" fill="none" stroke="#6e6e6e" stroke-width="3"/></svg>
      <div class="home"><svg class="faded2" width="25" height="25"><use href="#house"/></svg></div>
      <div class="fil"><svg width="34" height="34" viewBox="0 0 34 34"><path d="M1.500 1.500h31v3L20 17v15h-6V17L1.500 4.500zM5 6h24M9 10h16" fill="none" stroke="#6e6e6e" stroke-width="2"/></svg></div>
      <div class="inp"><i>Search Project</i><svg width="25" height="25"><use href="#mag"/></svg><svg class="c" width="16" height="11"><use href="#chev"/></svg></div>
    </div>
    <div class="treewrap">
      <ul class="tree">
        <li class="cut"><b></b></li>
        <li class="l0"><svg class="t"><use href="#shut"/></svg><svg class="ic" viewBox="0 0 32 30"><use href="#folder" width="32" height="26"/><path d="M7 12h20v18H7z" fill="#f7f9f8"/><use href="#cyls" x="7" y="12" width="19" height="18"/></svg>Databases</li>
        <li class="l0"><svg class="t"><use href="#shut"/></svg><svg class="ic" viewBox="0 0 32 30"><use href="#folder" width="32" height="26"/><path d="M8 11h12l5 5v13H8z" fill="#fff" stroke="#6e6e6e" stroke-width="2"/><path d="M11 15h9v6h-9z" fill="none" stroke="#57a5dc" stroke-width="2.500"/><path d="M11 25.500h10" stroke="#6e6e6e" stroke-width="2"/></svg>Layouts</li>
        <li class="l0"><svg class="t"><use href="#shut"/></svg><svg class="ic" viewBox="0 0 32 30"><use href="#folder" width="32" height="26"/><path d="M27 15c-5-6-17-6-20 3-2 7 4 10 9 8 0-4 3-5 8-6z" fill="#fff" stroke="#6e6e6e" stroke-width="2"/><circle cx="12" cy="17" r="1.600" fill="#57a5dc"/><circle cx="17" cy="15" r="1.600" fill="#c9674b"/><path d="M31 13 20 25" stroke="#6e6e6e" stroke-width="3"/><path d="M20 24l-4 5" stroke="#c08a55" stroke-width="4"/></svg>Styles</li>
        <li class="l0"><svg class="o"><use href="#open"/></svg><svg class="ic" viewBox="0 0 32 30"><use href="#folder" width="32" height="26"/><path d="M14 14v15l11-8z" fill="#f7f9f8"/><path d="M16 17v10l7-5z" fill="#6a6a6a"/></svg>Folders</li>
        <li class="l1"><svg class="t"><use href="#shut"/></svg><svg class="ic home2" viewBox="0 0 38 32"><use href="#folder" width="32" height="26"/><path d="M15 22 27 10l12 12v12H15z" fill="#f7f9f8"/><use class="dark" href="#house" x="16" y="12" width="22" height="22"/></svg>ArcGISPro</li>
        <li class="l1"><svg class="o"><use href="#open"/></svg><svg class="ic f"><use href="#folder"/></svg>R.SIGE</li>
        <li class="l2"><svg class="t"><use href="#shut"/></svg><svg class="ic f"><use href="#folder"/></svg>.idea</li>
        <li class="l2"><svg class="t"><use href="#shut"/></svg><svg class="ic f"><use href="#folder"/></svg>activity</li>
        <li class="l2"><svg class="o"><use href="#open"/></svg><svg class="ic f"><use href="#folder"/></svg>file</li>
        <li class="l3"><svg class="t"><use href="#shut"/></svg><svg class="ic f"><use href="#folder"/></svg>data</li>
        <li class="l3"><svg class="t"><use href="#shut"/></svg><svg class="ic f"><use href="#folder"/></svg>dem</li>
        <li class="l3"><svg class="o"><use href="#open"/></svg><svg class="ic f"><use href="#folder"/></svg>gdb</li>
        <li class="l4"><svg class="o"><use href="#open"/></svg><svg class="ic f"><use href="#cyls"/></svg>SIGE.gdb</li>
        <li class="l5"><svg class="t"><use href="#shut"/></svg><svg class="ic d"><use href="#dataset"/></svg>IGAC2013Cartografia</li>
        <li class="l5"><svg class="t"><use href="#shut"/></svg><svg class="ic d"><use href="#dataset"/></svg>IGAC2013EntidadTerritorialAdministrativa</li>
        <li class="l5"><svg class="t"><use href="#shut"/></svg><svg class="ic d"><use href="#dataset"/></svg>IGAC2013Rural</li>
        <li class="l5"><svg class="t"><use href="#shut"/></svg><svg class="ic d"><use href="#dataset"/></svg>IGAC2013Urbano</li>
        <li class="l5"><svg class="t"><use href="#shut"/></svg><svg class="ic d"><use href="#dataset"/></svg>POT2013Formulacion</li>
        <li class="l5"><svg class="t"><use href="#shut"/></svg><svg class="ic d"><use href="#dataset"/></svg>SIGE</li>
        <li class="l5"><svg class="t"><use href="#shut"/></svg><svg class="ic d"><use href="#dataset"/></svg>Temp</li>
        <li class="leaf picked"><svg class="ic d"><use href="#table"/></svg>Registro1</li>
        <li class="leaf"><svg class="ic d"><use href="#table"/></svg>Registro2</li>
        <li class="l3"><svg class="t"><use href="#shut"/></svg><svg class="ic f"><use href="#folder"/></svg>graph</li>
        <li class="l3"><svg class="t"><use href="#shut"/></svg><svg class="ic f"><use href="#folder"/></svg>grid</li>
        <li class="l3"><svg class="t"><use href="#shut"/></svg><svg class="ic f"><use href="#folder"/></svg>lyr</li>
        <li class="l3"><svg class="t"><use href="#shut"/></svg><svg class="ic f"><use href="#folder"/></svg>map</li>
        <li class="l3"><svg class="t"><use href="#shut"/></svg><svg class="ic f"><use href="#folder"/></svg>output</li>
        <li class="l3"><svg class="t"><use href="#shut"/></svg><svg class="ic f"><use href="#folder"/></svg>projectionfile</li>
        <li class="l3"><svg class="t"><use href="#shut"/></svg><svg class="ic f"><use href="#folder"/></svg>ref</li>
        <li class="l3"><svg class="t"><use href="#shut"/></svg><svg class="ic f"><use href="#folder"/></svg>report</li>
        <li class="l3"><svg class="t"><use href="#shut"/></svg><svg class="ic f"><use href="#folder"/></svg>shp</li>
      </ul>
      <div class="scroll"><svg class="up" width="14" height="10"><use href="#chev"/></svg><b></b><svg class="down" width="14" height="10"><use href="#chev"/></svg></div>
    </div>
  </section>

  <div class="geocol">
    <section class="panel geo">
      <div class="phead"><h2>Geoprocessing</h2><div class="pbtns"><svg width="15" height="11"><use href="#chev"/></svg><svg width="16" height="22"><use href="#pin"/></svg><svg width="22" height="22"><use href="#close"/></svg></div></div>
      <div class="gtitle">
        <svg width="36" height="36" viewBox="0 0 36 36"><circle cx="18" cy="18" r="16.700" fill="none" stroke="#5e5e5e" stroke-width="1.800"/><path d="M28 18H10M17.500 10l-8 8 8 8" fill="none" stroke="#6e6e6e" stroke-width="3"/></svg>
        <span>Table To Geodatabase</span>
        <svg width="36" height="36" viewBox="0 0 36 36"><circle cx="18" cy="18" r="16.700" fill="none" stroke="#5e5e5e" stroke-width="1.800"/><path d="M6 18h24M18 6v24" stroke="#6e6e6e" stroke-width="3"/></svg>
      </div>
      <div class="tabs gtabs"><span class="on">Parameters</span><span>Environments</span><svg class="help" width="33" height="33" viewBox="0 0 33 33"><circle cx="16.500" cy="16.500" r="15" fill="#e3f1fb" stroke="#57a5dc" stroke-width="2"/><path d="M11.500 12c0-7 10.500-6.500 10.500-.5 0 4-5.500 4-5.500 9" fill="none" stroke="#4c9ad4" stroke-width="2.800"/><path d="M15 23.500h3.200v3.200H15z" fill="#4c9ad4"/></svg></div>
      <div class="lbl first"><span class="tx">Input Table</span><svg width="36" height="36" viewBox="0 0 36 36"><circle cx="18" cy="18" r="16.700" fill="none" stroke="#5e5e5e" stroke-width="1.800"/><path d="M11 15l7 7 7-7" fill="none" stroke="#4c4c4c" stroke-width="3"/></svg></div>
      <div class="frows">
        <div class="frow"><b class="grip"></b><svg class="del" width="16" height="16" viewBox="0 0 16 16"><path d="M1.500 2 14.500 15M14.500 2 1.500 15" stroke="#cf6a4d" stroke-width="2.800"/></svg><div class="fld"><span class="tx">Registro2</span><svg width="11" height="8"><use href="#chev"/></svg></div><svg class="fo" width="33" height="26"><use href="#folderopen"/></svg></div>
        <div class="frow"><b class="nogrip"></b><div class="fld"><span class="tx">Registro1</span><svg width="11" height="8"><use href="#chev"/></svg></div><svg class="fo" width="33" height="26"><use href="#folderopen"/></svg></div>
        <div class="frow"><b class="nogrip"></b><div class="fld"><svg width="11" height="8"><use href="#chev"/></svg></div><svg class="fo" width="33" height="26"><use href="#folderopen"/></svg></div>
      </div>
      <div class="lbl">Output Geodatabase</div>
      <div class="frow out"><div class="fld soft"><span class="tx">SIGE.gdb</span></div><svg class="fo" width="33" height="26"><use href="#folderopen"/></svg></div>
      <div class="runrow"><div class="run"><svg width="32" height="32" viewBox="0 0 32 32"><circle cx="16" cy="16" r="15" fill="#d6eaf8" stroke="#57a5dc" stroke-width="2"/><path d="M12 8v16l11-8z" fill="#57a5dc"/></svg><span class="tx">Run</span><svg class="c" width="12" height="9"><use href="#chev"/></svg></div></div>
    </section>
    <div class="btabs"><span class="act">Geoprocessing</span><span>Symbology</span><span>Modify Features</span><span>Label Class</span><span>Chart Properties</span></div>
  </div>
</main>
<footer class="status"></footer>
</body>
</html>
```
FILE: styles.css
```css
* { box-sizing: border-box; }
body {
  margin: 0; width: 3072px; height: 1838px; overflow: hidden;
  display: flex; flex-direction: column;
  background: #ebebeb; color: #4c4c4c;
  font-family: "Open Sans", "Noto Sans", sans-serif; font-size: 22.4px; line-height: 30px;
}
svg { flex: none; display: block; }
ul { list-style: none; margin: 0; padding: 0; }
h2, h3 { margin: 0; }
.defs { position: absolute; }
.faded { opacity: .4; }
.faded2 { opacity: .5; }
.tx { padding-top: 2px; }

/* title bar */
.titlebar { height: 62px; background: #f7f9f8; display: flex; align-items: center; color: #6e6e6e; white-space: nowrap; }
.qat { width: 1287px; padding-left: 14px; display: flex; align-items: center; }
.qat svg { margin-right: 25px; }
.qat svg:nth-child(2) { margin-right: 22px; }
.qat svg:nth-child(3) { margin-right: 18px; }
.qat svg:nth-child(4) { margin-right: 15px; }
.qat .mini { color: #4c4c4c; margin: 2px 15px 0 0; }
.qat .g2 { margin-right: 16px; }
.qat .g3 { margin-right: 32px; }
.appname { width: 130px; padding-top: 4px; }
.cmdsearch { width: 360px; height: 48px; border: 2px solid #a0a1a2; border-radius: 6px; display: flex; align-items: center; gap: 12px; padding-left: 12px; color: #7e7e7e; }
.cmdsearch svg { color: #5e5e5e; }
.cmdsearch i { padding-top: 2px; }
.org { margin-left: 238px; width: 566px; padding-top: 4px; font-size: 23.2px; }
.avatar { margin-left: 14px; width: 48px; height: 48px; border-radius: 50%; background: #1b1b1b; color: #b0b0b0; font-size: 16px; display: flex; align-items: center; justify-content: center; }
.winbtns { margin-left: 32px; display: flex; align-items: center; }
.winbtns svg:nth-child(1) { margin-right: 57px; }
.winbtns svg:nth-child(3) { margin: 0 67px 0 65px; }
.winbtns svg:nth-child(4) { margin-right: 65px; }
.qm { font-size: 27px; width: 18px; }

/* ribbon */
.ribbon { height: 53px; background: #f7f9f8; border-bottom: 2px solid #bfc1c4; display: flex; align-items: flex-start; font-size: 24.4px; color: #1a1a1a; }
.maintabs { width: 1416px; padding: 14px 0 0 35px; display: grid; grid-template-columns: 153px 115px 130px 157px 119px 109px 158px 132px 181px 100px; white-space: nowrap; }
.ctxtabs { width: 503px; height: 50px; margin-top: 1px; padding: 11px 0 0 31px; background: #fff; border: 2px solid #dcdde0; border-radius: 8px; display: grid; grid-template-columns: 222px 163px 90px; white-space: nowrap; }

/* work area */
.work { height: 1710px; padding: 12px 11px 13px 12px; display: grid; grid-template-columns: 511px 661px 919px 919px; gap: 13px; }
.status { height: 13px; background: #eee; border-top: 2px solid #bfbfbf; }
.panel { background: #f7f9f8; border: 2px solid #d3d4d8; border-radius: 8px 8px 0 0; min-height: 0; overflow: hidden; display: flex; flex-direction: column; }
.phead { height: 66px; padding: 0 13px 0 11px; display: flex; align-items: center; justify-content: space-between; flex: none; }
.phead h2 { font-size: 30px; font-weight: 400; color: #151515; line-height: 40px; }
.pbtns { display: flex; align-items: center; gap: 20px; color: #4c4c4c; padding-bottom: 5px; }
.pbtns svg:nth-child(2) { margin-right: -3px; }

/* contents */
.csearch { height: 48px; padding: 0 6px 0 7px; display: flex; align-items: center; gap: 15px; flex: none; }
.csearch .box { flex: 1; height: 48px; border: 2px solid #959595; background: #fff; display: flex; align-items: center; padding: 0 12px 0 10px; color: #5e5e5e; }
.csearch i, .inp i { flex: 1; padding-top: 2px; }
.csearch .c { margin-left: 22px; color: #6e6e6e; }
.ctools { height: 79px; padding: 6px 0 0 39px; display: flex; align-items: center; flex: none; }
.ctools svg { margin-right: 22px; }
.ctools svg:nth-child(1) { margin-right: 21px; }
.ctools svg:nth-child(2) { margin-right: 23px; }
.ctools svg:nth-child(5) { margin-right: 19px; }
.ctools .dots { margin: 16px 0 0 14px; }
.cline { height: 6px; width: 388px; margin-left: 29px; background: linear-gradient(90deg, #0079c1 64px, transparent 64px), linear-gradient(#f7f9f8 4px, #c9cacb 4px); flex: none; }
.contents h3 { font-size: 25px; font-weight: 600; height: 72px; padding: 27px 0 0 29px; flex: none; }
.toc { padding-left: 24px; }
.row { height: 47px; display: flex; align-items: center; }
.row .tri { width: 14px; margin: 0 5px 0 2px; }
.row.root .tri { margin: 0 8px 0 -20px; }
.row.root .mi { margin-right: 11px; }
.lab { width: 461px; height: 47px; display: flex; align-items: center; gap: 10px; padding-left: 2px; border: 1px solid transparent; }
.lab.selected { background: #c6dbee; border-color: #0079c1; height: 49px; letter-spacing: .3px; }
.sym { height: 47.200px; padding: 0 0 6px 32px; display: flex; align-items: center; }
.sym.first { height: 44px; padding-left: 31px; }
.ln { width: 37px; margin-left: 1px; border-radius: 3px; }
.ln.river { height: 6px; background: #0054eb; }
.ln.hydro { height: 3px; background: #00a9e6; border-radius: 0; }
.ln.road { height: 3px; background: #6a6a6a; border-radius: 0; }
.sw { width: 41px; height: 32px; border: 1.500px solid #6e6e6e; }
.sw.pink { background: #fcc9ca; }
.sw.green { background: #c6fcd8; }

/* map view */
.mapview { display: flex; flex-direction: column; background: #d3d4d8; border-bottom: 2px solid #d3d4d8; }
.mtabs { height: 44px; background: #ebebeb; display: flex; align-items: center; justify-content: space-between; }
.mtab { height: 44px; width: 153px; background: #d3d4d8; border-radius: 8px 8px 0 0; display: flex; align-items: center; gap: 11px; padding: 4px 0 0 11px; color: #4c4c4c; }
.mtab .x { margin-left: 6px; margin-bottom: 4px; color: #6e6e6e; }
.more { margin: 4px 10px 0 0; color: #6e6e6e; }
.map { margin: 6px 2px 0 1px; }
.sheet path { vector-effect: non-scaling-stroke; stroke-linejoin: round; }
.rural { fill: #fcc9ca; }
.town, .townfill { fill: #c6fcd8; }
.edge2 { stroke: #6e6e6e; stroke-width: 1.600px; }
.via, .edge, .hid, .bog { fill: none; }
.via { stroke: #6a6a6a; stroke-width: 2.500px; }
.via.thick { stroke-width: 4px; }
.edge { stroke: #757575; stroke-width: 1.600px; }
.hid { stroke: #00a9e6; stroke-width: 2.500px; }
.hid.wide { stroke-width: 3px; }
.bog { stroke: #0059f0; stroke-width: 5.500px; }
.pts circle { fill: #3a8a56; stroke: #000; stroke-width: 2px; }
.mbar { margin: 0 2px; height: 47px; background: #f7f9f8; display: flex; align-items: center; overflow: hidden; }
.mbar > * { flex: none; }
.scale { margin-left: 9px; width: 200px; height: 44px; background: #fff; border: 2px solid #8f8f8f; display: flex; align-items: center; justify-content: space-between; padding: 0 9px 0 12px; color: #1a1a1a; }
.scale span { padding-top: 2px; }
.sep { width: 2px; height: 30px; background: #a9a9a9; }
.s1 { margin-left: 9px; }
.snap { margin: 0 6px 4px 7px; width: 40px; height: 40px; background: #9ccbec; border: 2px solid #0062a3; display: flex; align-items: center; justify-content: center; }
.t2 { margin-left: 12px; }
.t3 { margin-left: 8px; }
.t4 { margin-left: 8px; }
.mbar .t1, .mbar .t2, .mbar .t3, .mbar .t4 { margin-bottom: 4px; }
.t5 { margin-left: 12px; color: #1a1a1a; }
.s2 { margin-left: 16px; }
.s3 { margin-left: 16px; }
.zsel { margin-left: 12px; display: flex; gap: 9px; opacity: .6; align-items: center; width: 68px; }
.s4 { margin-left: 1px; }
.t6 { margin: 4px 17px 0; }
.pause { margin-left: 15px; width: 7px; height: 26px; background: #6a6a6a; }

/* catalog */
.tabs { height: 44px; padding-left: 11px; display: flex; gap: 21px; font-size: 24.200px; flex: none; white-space: nowrap; }
.tabs span { height: 44px; padding-top: 5px; }
.tabs .on { font-weight: 600; font-size: 23.500px; letter-spacing: -.05px; border-bottom: 4px solid #0079c1; }
.burger { margin: 8px 15px 0 auto; }
.psearch { height: 48px; margin: 18px 10px 0 9px; display: flex; align-items: center; flex: none; }
.home { margin-left: 10px; width: 39px; height: 48px; border: 2px solid #c9c9c9; border-right: 0; display: flex; align-items: center; justify-content: center; color: #6e6e6e; padding-left: 3px; }
.fil { width: 47px; height: 48px; border: 2px solid #959595; display: flex; align-items: center; justify-content: center; background: #fbfbfb; }
.inp { flex: 1; height: 48px; border: 2px solid #959595; border-left: 0; background: #fff; display: flex; align-items: center; padding: 0 12px 0 10px; color: #5e5e5e; }
.inp .c { margin-left: 22px; color: #1a1a1a; }
.treewrap { flex: 1; min-height: 0; margin: 10px 10px 0 0; display: flex; }
.tree { flex: 1; min-width: 0; overflow: hidden; }
.tree li { height: 48.030px; padding-top: 3px; display: flex; align-items: center; white-space: nowrap; }
.tree .cut { height: 15px; align-items: flex-start; padding: 2px 0 0 57px; }
.cut b { width: 20px; height: 4px; background: #cf6a4d; }
.tree .t { width: 12px; height: 18px; margin: 0 13px 6px 4px; }
.tree .o { width: 14px; height: 14px; margin: 0 16px 6px -1px; }
.tree .ic { width: 32px; height: 30px; margin: 0 17px 2px 0; }
.tree .ic.f { height: 26px; margin-bottom: 5px; }
.tree .ic.d { width: 34px; height: 30px; margin: 0 15px 4px 0; }
.tree .home2 { width: 38px; height: 32px; margin-right: 11px; }
.dark { color: #6e6e6e; }
.l0 { padding-left: 21px; }
.l1 { padding-left: 53px; }
.l2 { padding-left: 85px; }
.l3 { padding-left: 117px; }
.l4 { padding-left: 149px; }
.l5 { padding-left: 181px; }
.leaf { margin: 0 2px 0 203px; padding-left: 7px; }
.leaf.picked { background: #c6dbee; outline: 2px solid #0079c1; outline-offset: -2px; }
.scroll { width: 34px; background: #ebebeb; display: flex; flex-direction: column; align-items: center; color: #5e5e5e; }
.scroll .up { transform: rotate(180deg); margin-top: 12px; }
.scroll b { width: 18px; height: 1161px; border-radius: 9px; background: #b4b4b4; margin-top: 82px; }
.scroll .down { margin: auto 0 11px; }

/* geoprocessing */
.geocol { display: flex; flex-direction: column; min-height: 0; }
.geo { height: 1647px; flex: none; }
.gtitle { height: 48px; padding: 0 12px 0 13px; display: flex; align-items: center; justify-content: space-between; font-size: 28px; flex: none; }
.gtabs { margin-top: 22px; height: 46px; padding-left: 17px; gap: 20px; }
.gtabs span { height: 46px; padding-top: 7px; }
.help { margin: 6px 12px 0 auto; }
.lbl { height: 52px; padding: 23px 0 0 35px; flex: none; }
.lbl.first { height: 60px; padding: 20px 0 0 35px; display: flex; align-items: center; gap: 15px; }
.frows { display: flex; flex-direction: column; gap: 4px; flex: none; }
.frow { height: 44px; padding: 0 22px 0 35px; display: flex; align-items: center; flex: none; }
.grip { width: 10px; height: 44px; background: #dedede; }
.del { margin: 0 10px 0 14px; }
.nogrip { width: 50px; }
.fld { flex: 1; height: 44px; background: #fff; border: 2px solid #959595; display: flex; align-items: center; padding: 0 10px 0 8px; color: #1a1a1a; }
.fld svg { margin-left: auto; color: #6e6e6e; }
.fld.soft { color: #4c4c4c; }
.fo { margin-left: 13px; }
.runrow { margin-top: auto; padding: 0 12px 12px; display: flex; justify-content: flex-end; }
.run { width: 170px; height: 48px; border: 2px solid #4c4c4c; border-radius: 5px; background: #fff; display: flex; align-items: center; padding: 0 7px 0 21px; }
.run span { margin-left: 14px; font-size: 23px; }
.run .c { margin-left: auto; }
.btabs { display: flex; margin-top: -2px; font-size: 23px; white-space: nowrap; }
.btabs span { padding-top: 7px; height: 41px; margin-right: 25px; }
.btabs .act { width: 180px; margin-right: 13px; padding-left: 9px; color: #0079c1; background: #f7f9f8; border: 2px solid #d3d4d8; border-top: 0; border-radius: 0 0 8px 8px; font-size: 22.8px; }
```
